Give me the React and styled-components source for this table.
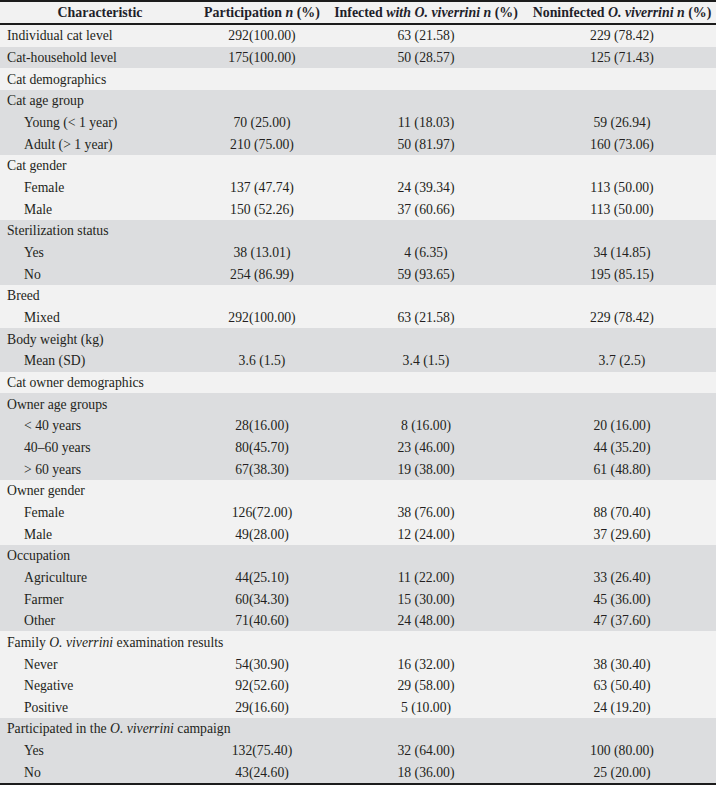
import styled, { createGlobalStyle } from 'styled-components';

const GlobalStyle = createGlobalStyle`
  html, body {
    margin: 0;
    padding: 0;
    background: #ffffff;
  }
  body {
    font-family: 'Liberation Serif', 'Times New Roman', serif;
    color: #231f20;
  }
`;

const Table = styled.table`
  width: 716px;
  border-collapse: collapse;
  table-layout: fixed;
  font-size: 13.7px;
  line-height: 1;
  border-top: 2px solid #1c1c1c;
  border-bottom: 4px solid #1c1c1c;
`;

const HeadRow = styled.tr`
  background: #f2f2f2;
  border-bottom: 2px solid #1c1c1c;
`;

const HeadCell = styled.th`
  height: 21px;
  padding: 0;
  font-size: 13.9px;
  font-weight: bold;
  text-align: center;
  vertical-align: middle;
  color: #1f1f2b;
  white-space: nowrap;
`;

const Row = styled.tr`
  background: ${(p) => (p.$shade ? '#dcdddf' : '#f2f2f2')};
`;

const LabelCell = styled.td`
  height: 20.66px;
  padding: 1px 0 0 ${(p) => (p.$indent ? '24px' : '7px')};
  vertical-align: middle;
  white-space: nowrap;
`;

const ValueCell = styled.td`
  padding: 1px 0 0;
  text-align: center;
  vertical-align: middle;
  white-space: nowrap;
`;

const Em = styled.i`
  font-style: italic;
`;

const OV = <Em>O. viverrini</Em>;

const groups = [
  { rows: [['Individual cat level', '292(100.00)', '63 (21.58)', '229 (78.42)']] },
  { rows: [['Cat-household level', '175(100.00)', '50 (28.57)', '125 (71.43)']] },
  { rows: [['Cat demographics']] },
  {
    rows: [
      ['Cat age group'],
      ['Young (< 1 year)', '70 (25.00)', '11 (18.03)', '59 (26.94)'],
      ['Adult (> 1 year)', '210 (75.00)', '50 (81.97)', '160 (73.06)'],
    ],
  },
  {
    rows: [
      ['Cat gender'],
      ['Female', '137 (47.74)', '24 (39.34)', '113 (50.00)'],
      ['Male', '150 (52.26)', '37 (60.66)', '113 (50.00)'],
    ],
  },
  {
    rows: [
      ['Sterilization status'],
      ['Yes', '38 (13.01)', '4 (6.35)', '34 (14.85)'],
      ['No', '254 (86.99)', '59 (93.65)', '195 (85.15)'],
    ],
  },
  {
    rows: [
      ['Breed'],
      ['Mixed', '292(100.00)', '63 (21.58)', '229 (78.42)'],
    ],
  },
  {
    rows: [
      ['Body weight (kg)'],
      ['Mean (SD)', '3.6 (1.5)', '3.4 (1.5)', '3.7 (2.5)'],
    ],
  },
  { rows: [['Cat owner demographics']] },
  {
    rows: [
      ['Owner age groups'],
      ['< 40 years', '28(16.00)', '8 (16.00)', '20 (16.00)'],
      ['40–60 years', '80(45.70)', '23 (46.00)', '44 (35.20)'],
      ['> 60 years', '67(38.30)', '19 (38.00)', '61 (48.80)'],
    ],
  },
  {
    rows: [
      ['Owner gender'],
      ['Female', '126(72.00)', '38 (76.00)', '88 (70.40)'],
      ['Male', '49(28.00)', '12 (24.00)', '37 (29.60)'],
    ],
  },
  {
    rows: [
      ['Occupation'],
      ['Agriculture', '44(25.10)', '11 (22.00)', '33 (26.40)'],
      ['Farmer', '60(34.30)', '15 (30.00)', '45 (36.00)'],
      ['Other', '71(40.60)', '24 (48.00)', '47 (37.60)'],
    ],
  },
  {
    rows: [
      [<>Family {OV} examination results</>],
      ['Never', '54(30.90)', '16 (32.00)', '38 (30.40)'],
      ['Negative', '92(52.60)', '29 (58.00)', '63 (50.40)'],
      ['Positive', '29(16.60)', '5 (10.00)', '24 (19.20)'],
    ],
  },
  {
    rows: [
      [<>Participated in the {OV} campaign</>],
      ['Yes', '132(75.40)', '32 (64.00)', '100 (80.00)'],
      ['No', '43(24.60)', '18 (36.00)', '25 (20.00)'],
    ],
  },
];

export default function App() {
  return (
    <>
      <GlobalStyle />
      <Table>
        <colgroup>
          <col style={{ width: 200 }} />
          <col style={{ width: 124 }} />
          <col style={{ width: 204 }} />
          <col style={{ width: 188 }} />
        </colgroup>
        <thead>
          <HeadRow>
            <HeadCell>Characteristic</HeadCell>
            <HeadCell>
              Participation <Em>n</Em> (%)
            </HeadCell>
            <HeadCell>
              Infected <Em>with O. viverrini n</Em> (%)
            </HeadCell>
            <HeadCell>
              Noninfected <Em>O. viverrini n</Em> (%)
            </HeadCell>
          </HeadRow>
        </thead>
        <tbody>
          {groups.map((g, gi) =>
            g.rows.map((r, ri) => (
              <Row key={`${gi}-${ri}`} $shade={gi % 2 === 1}>
                <LabelCell $indent={ri > 0}>{r[0]}</LabelCell>
                <ValueCell>{r[1]}</ValueCell>
                <ValueCell>{r[2]}</ValueCell>
                <ValueCell>{r[3]}</ValueCell>
              </Row>
            ))
          )}
        </tbody>
      </Table>
    </>
  );
}
